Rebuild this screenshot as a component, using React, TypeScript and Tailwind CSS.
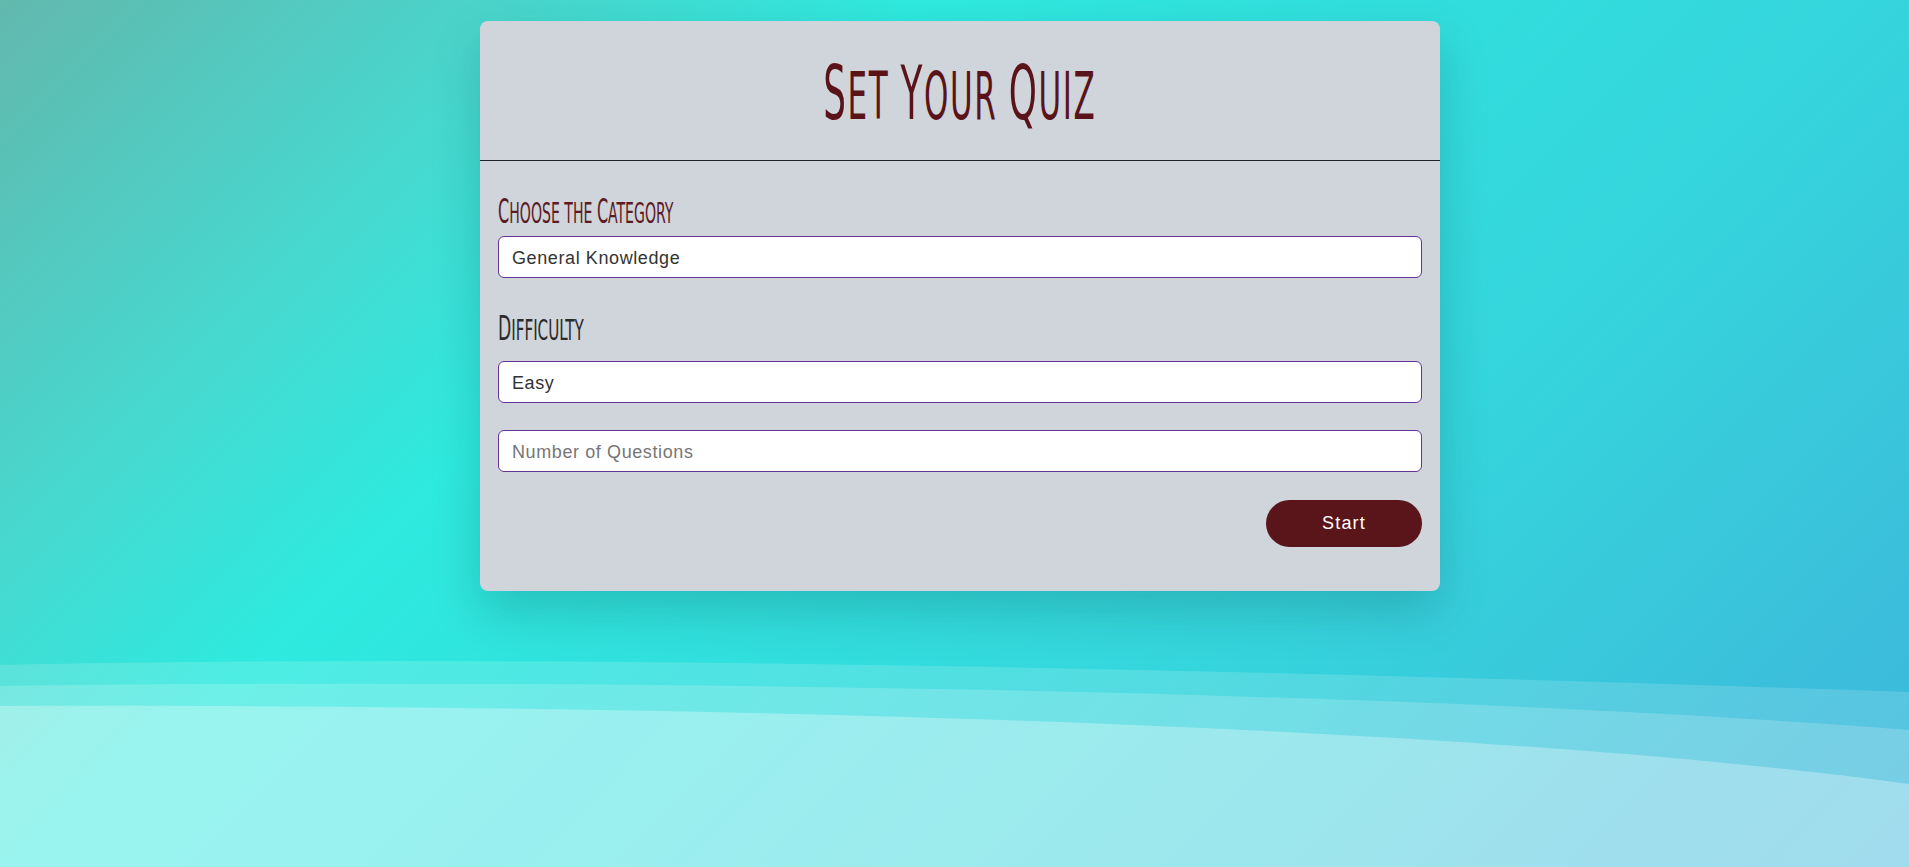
import React from "react";

const narrow = "font-['Liberation_Sans_Narrow','DejaVu_Sans_Condensed',sans-serif]";

function SmallCaps({ text, big, small }: { text: string; big: string; small: string }) {
  const words = text.split(" ");
  return (
    <>
      {words.map((w, i) => (
        <React.Fragment key={i}>
          {i > 0 && <span className={small}> </span>}
          {/^[A-Z]/.test(w) ? (
            <>
              <span className={big}>{w[0]}</span>
              <span className={`${small} uppercase`}>{w.slice(1)}</span>
            </>
          ) : (
            <span className={`${small} uppercase`}>{w}</span>
          )}
        </React.Fragment>
      ))}
    </>
  );
}

export default function App() {
  return (
    <div className="relative min-h-[867px] w-full overflow-hidden bg-[linear-gradient(135deg,#62b8ad_0%,#47d8cf_20%,#2eeadf_33%,#35d4dc_69%,#3bbfdb_89%,#3cb8dc_100%)]">
      <svg
        className="pointer-events-none absolute inset-0 h-full w-full"
        viewBox="0 0 1909 867"
        preserveAspectRatio="none"
      >
        <path d="M0 665 Q 700 650 1909 692 L1909 867 L0 867 Z" fill="#ffffff" fillOpacity="0.15" />
        <path d="M0 686 C 600 678 1400 690 1909 730 L1909 867 L0 867 Z" fill="#ffffff" fillOpacity="0.18" />
        <path d="M0 706 C 500 704 1400 715 1909 784 L1909 867 L0 867 Z" fill="#ffffff" fillOpacity="0.3" />
      </svg>

      <div className="relative z-10 ml-[480px] mt-[21px] w-[960px] rounded-lg bg-[#d0d4db] shadow-[0_20px_50px_rgba(0,40,50,0.2)]">
        <div className="flex h-[140px] items-center justify-center border-b border-[#1f2328] pt-[5px]">
          <h1 className={`${narrow} inline-block scale-x-[0.53] whitespace-nowrap text-[75px] font-normal leading-none tracking-[3px] text-[#5a1419]`}>
            <SmallCaps text="Set Your Quiz" big="text-[75px]" small="text-[65px]" />
          </h1>
        </div>

        <div className="flex flex-col px-[18px] pb-[44px] pt-[34px]">
          <label className={`${narrow} block h-[33px] origin-left scale-x-[0.54] whitespace-nowrap text-[33px] leading-none text-[#5c1a22]`}>
            <SmallCaps text="Choose the Category" big="text-[33px]" small="text-[29px]" />
          </label>
          <input
            readOnly
            value="General Knowledge"
            className="mt-[8px] h-[42px] w-full rounded-[6px] border border-[#663399] bg-white px-[13px] pt-[2px] font-['Liberation_Sans',sans-serif] text-[18px] tracking-[0.6px] text-[#333] outline-none"
          />

          <label className={`${narrow} mt-[34px] block h-[33px] origin-left scale-x-[0.58] whitespace-nowrap text-[33px] leading-none text-[#2b2b2b]`}>
            <SmallCaps text="Difficulty" big="text-[33px]" small="text-[29px]" />
          </label>
          <input
            readOnly
            value="Easy"
            className="mt-[16px] h-[42px] w-full rounded-[6px] border border-[#663399] bg-white px-[13px] pt-[2px] font-['Liberation_Sans',sans-serif] text-[18px] tracking-[0.6px] text-[#333] outline-none"
          />

          <input
            placeholder="Number of Questions"
            className="mt-[27px] h-[42px] w-full rounded-[6px] border border-[#663399] bg-white px-[13px] pt-[2px] font-['Liberation_Sans',sans-serif] text-[18px] tracking-[0.6px] text-[#333] outline-none placeholder:text-[#767676]"
          />

          <div className="mt-[28px] flex justify-end">
            <button className="h-[47px] w-[156px] rounded-full bg-[#5a151b] font-['Liberation_Sans',sans-serif] text-[18px] font-medium tracking-[1.2px] text-white">
              Start
            </button>
          </div>
        </div>
      </div>
    </div>
  );
}
